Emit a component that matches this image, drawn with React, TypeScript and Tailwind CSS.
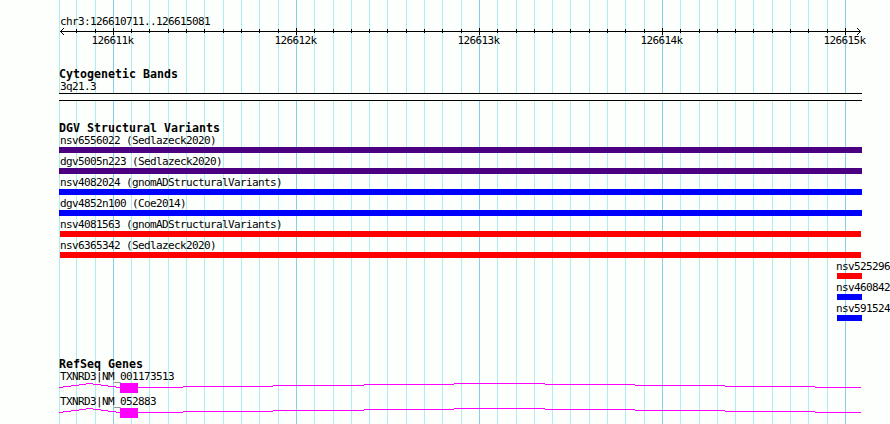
const minorLines = [
  59, 76, 95, 131, 149, 168, 186, 204, 223, 241, 259, 278, 314, 333, 351, 369,
  387, 406, 424, 442, 461, 497, 516, 534, 552, 570, 589, 607, 625, 644, 680,
  699, 717, 735, 753, 772, 790, 808, 827,
];

const majorLines = [
  { x: 113, label: "126611k" },
  { x: 296, label: "126612k" },
  { x: 479, label: "126613k" },
  { x: 662, label: "126614k" },
  { x: 845, label: "126615k" },
];

const variants = [
  { name: "nsv6556022 (Sedlazeck2020)", bar: "w-[803px] bg-[#4b0082]" },
  { name: "dgv5005n223 (Sedlazeck2020)", bar: "w-[803px] bg-[#4b0082]" },
  { name: "nsv4082024 (gnomADStructuralVariants)", bar: "w-[803px] bg-[#0000ff]" },
  { name: "dgv4852n100 (Coe2014)", bar: "w-[803px] bg-[#0000ff]" },
  { name: "nsv4081563 (gnomADStructuralVariants)", bar: "ml-px w-[801px] bg-[#ff0000]" },
  { name: "nsv6365342 (Sedlazeck2020)", bar: "ml-px w-[801px] bg-[#ff0000]" },
];

const shortVariants = [
  { name: "nsv525296", bar: "bg-[#ff0000]" },
  { name: "nsv460842", bar: "bg-[#0000ff]" },
  { name: "nsv591524", bar: "bg-[#0000ff]" },
];

const genes = ["TXNRD3|NM_001173513", "TXNRD3|NM_052883"];

// [start, end, y] of each intron segment, relative to the gene row
const intronSteps = [
  [0, 4, 4], [4, 12, 3], [12, 20, 2], [20, 27, 1], [27, 34, 0], [34, 42, 1],
  [42, 49, 2], [49, 57, 3], [57, 61, 4], [79, 124, 4], [124, 214, 3],
  [214, 305, 2], [305, 395, 1], [395, 486, 0], [486, 576, 1], [576, 666, 2],
  [666, 756, 3], [756, 802, 4],
];

function GridLines() {
  return (
    <svg className="absolute inset-0 -z-10" width="890" height="424" shapeRendering="crispEdges">
      {minorLines.map((x) => (
        <rect key={x} x={x} y="0" width="1" height="424" fill="#afeeee" />
      ))}
      {majorLines.map(({ x }) => (
        <rect key={x} x={x} y="0" width="1" height="424" fill="#87ceeb" />
      ))}
    </svg>
  );
}

function Axis() {
  return (
    <svg className="block" width="831" height="20" viewBox="59 28 831 20" shapeRendering="crispEdges">
      <rect x="60" y="31" width="801" height="1" />
      {minorLines.slice(1).map((x) => (
        <rect key={x} x={x} y="29" width="1" height="4" />
      ))}
      {[1, 2, 3].map((d) => (
        <g key={d}>
          <rect x={60 + d} y={31 - d} width="1" height="1" />
          <rect x={60 + d} y={31 + d} width="1" height="1" />
          <rect x={860 - d} y={31 - d} width="1" height="1" />
          <rect x={860 - d} y={31 + d} width="1" height="1" />
        </g>
      ))}
      {majorLines.map(({ x, label }) => (
        <g key={x}>
          <rect x={x} y="28" width="1" height="7" />
          <text x={x - 21.5} y="44">{label}</text>
        </g>
      ))}
    </svg>
  );
}

function Title({ children }: { children: string }) {
  return (
    <h2 className="h-3 whitespace-pre text-[11.6px] leading-3 font-bold tracking-[0.016px]">
      {children}
    </h2>
  );
}

function Gene({ name }: { name: string }) {
  return (
    <div className="h-[25px]">
      <div className="h-[13px] pl-px leading-[13px]">{name}</div>
      <svg className="block" width="803" height="12" shapeRendering="crispEdges" fill="#ff00ff">
        {intronSteps.map(([start, end, y]) => (
          <rect key={start} x={start} y={y} width={end - start} height="1" />
        ))}
        <rect x="61" y="0" width="18" height="10" />
      </svg>
    </div>
  );
}

export default function App() {
  return (
    <main className="relative isolate h-[424px] w-[890px] overflow-hidden bg-[#fdfffc] pl-[59px] font-['DejaVu_Sans_Mono',monospace] text-[11px] tracking-[-0.622px] whitespace-pre text-black">
      <GridLines />

      <div className="h-7 pt-[15px] pl-px leading-[13px]">chr3:126610711..126615081</div>
      <Axis />

      <section className="pt-5">
        <Title>Cytogenetic Bands</Title>
        <div className="h-[13px] pl-px leading-[13px]">3q21.3</div>
        <div className="h-2 w-[803px] border-y border-black bg-[#fdfffc]" />
      </section>

      <section className="pt-[21px]">
        <Title>DGV Structural Variants</Title>
        {variants.map(({ name, bar }) => (
          <div key={name} className="h-[21px]">
            <div className="h-[13px] pl-px leading-[13px]">{name}</div>
            <div className={`h-1.5 ${bar}`} />
          </div>
        ))}
        {shortVariants.map(({ name, bar }) => (
          <div key={name} className="ml-[778px] h-[21px]">
            <div className="-ml-px h-[13px] leading-[13px]">{name}</div>
            <div className={`h-1.5 w-[25px] ${bar}`} />
          </div>
        ))}
      </section>

      <section className="pt-[35px]">
        <Title>RefSeq Genes</Title>
        {genes.map((name) => (
          <Gene key={name} name={name} />
        ))}
      </section>
    </main>
  );
}
